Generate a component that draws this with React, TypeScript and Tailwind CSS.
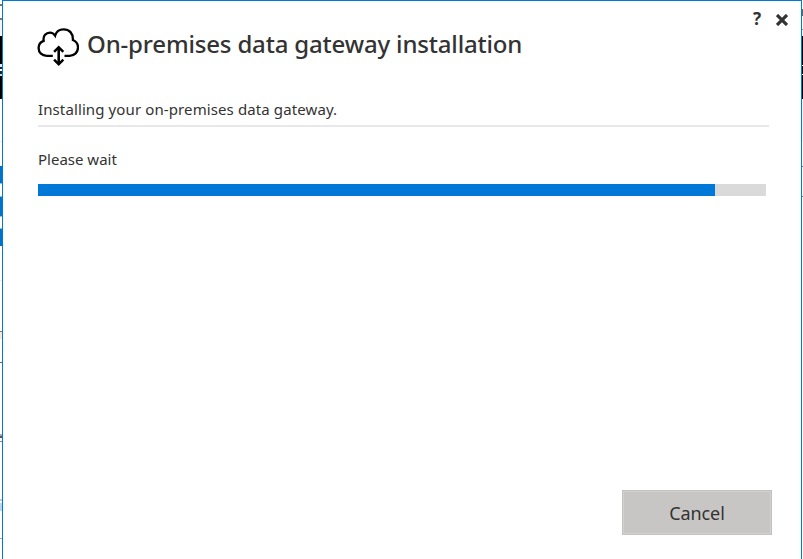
import React from 'react';

interface Segment {
  height: number;
  color: string;
}

const PROGRESS = 93;

// Slivers of the desktop that stay visible beside the dialog
const leftEdge: Segment[] = [
  { height: 4, color: 'bg-white' },
  { height: 2, color: 'bg-[#777777]' },
  { height: 12, color: 'bg-white' },
  { height: 2, color: 'bg-[#777777]' },
  { height: 16, color: 'bg-[#f4f4f4]' },
  { height: 28, color: 'bg-black' },
  { height: 3, color: 'bg-[#dce8ff]' },
  { height: 2, color: 'bg-[#0b1f6b]' },
  { height: 2, color: 'bg-white' },
  { height: 3, color: 'bg-[#0a2a40]' },
  { height: 2, color: 'bg-[#b8dcf0]' },
  { height: 23, color: 'bg-black' },
  { height: 42, color: 'bg-white' },
  { height: 1, color: 'bg-[#eeeeee]' },
  { height: 24, color: 'bg-white' },
  { height: 17, color: 'bg-[#0072c9]' },
  { height: 1, color: 'bg-[#8fc3e9]' },
  { height: 12, color: 'bg-white' },
  { height: 1, color: 'bg-[#8fc3e9]' },
  { height: 19, color: 'bg-[#0072c9]' },
  { height: 1, color: 'bg-[#8fc3e9]' },
  { height: 11, color: 'bg-white' },
  { height: 1, color: 'bg-[#8fc3e9]' },
  { height: 17, color: 'bg-[#0072c9]' },
  { height: 34, color: 'bg-white' },
  { height: 1, color: 'bg-[#eeeeee]' },
  { height: 50, color: 'bg-white' },
  { height: 1, color: 'bg-[#777777]' },
  { height: 7, color: 'bg-[#f7e9da]' },
  { height: 23, color: 'bg-white' },
  { height: 1, color: 'bg-[#666666]' },
  { height: 71, color: 'bg-white' },
  { height: 2, color: 'bg-[#9aaed0]' },
  { height: 2, color: 'bg-[#60544c]' },
  { height: 3, color: 'bg-white' },
  { height: 1, color: 'bg-[#7c8ba0]' },
  { height: 57, color: 'bg-white' },
  { height: 2, color: 'bg-[#b5cdea]' },
  { height: 2, color: 'bg-white' },
  { height: 8, color: 'bg-[#b5d8f5]' },
  { height: 27, color: 'bg-white' },
  { height: 1, color: 'bg-[#aaaaaa]' },
  { height: 20, color: 'bg-white' },
];

const rightEdge: Segment[] = [
  { height: 9, color: 'bg-white' },
  { height: 7, color: 'bg-[#666666]' },
  { height: 13, color: 'bg-white' },
  { height: 1, color: 'bg-[#999999]' },
  { height: 6, color: 'bg-[#f4f4f4]' },
  { height: 29, color: 'bg-black' },
  { height: 1, color: 'bg-white' },
  { height: 8, color: 'bg-black' },
  { height: 1, color: 'bg-white' },
  { height: 24, color: 'bg-black' },
  { height: 43, color: 'bg-[#f4f4f4]' },
  { height: 24, color: 'bg-white' },
  { height: 1, color: 'bg-[#777777]' },
  { height: 29, color: 'bg-white' },
  { height: 1, color: 'bg-[#777777]' },
  { height: 362, color: 'bg-white' },
];

const Edge: React.FC<{ segments: Segment[]; width: string }> = ({ segments, width }) => (
  <div className={`flex shrink-0 flex-col overflow-hidden ${width}`}>
    {segments.map((segment, index) => (
      <div key={index} className={`shrink-0 ${segment.color}`} style={{ height: segment.height }} />
    ))}
  </div>
);

const CloudIcon: React.FC = () => (
  <svg className="mt-[26px] h-10 w-[42px] shrink-0" viewBox="0 0 42 40" fill="none" stroke="black" strokeWidth="2.3">
    <path d="M15.8 28.8H9.8C5 28.8 1.6 25.7 1.6 21C1.6 17.5 3.6 14.9 6.7 13.8C5.7 8.8 9.2 5.6 13 5.6C15.1 5.6 16.9 6.7 18.1 8.6C19.3 4.4 22.7 2.3 26.6 2.3C32.3 2.3 36.2 6.3 35.9 13C39.1 14.3 41 17 41 20.3C41 25.3 37.5 28.8 32.6 28.8H27.5" />
    <path d="M21.7 20.5V37" strokeWidth="2.6" />
    <path d="M17.1 24.8L21.7 20.2L26.3 24.8M17.1 32.7L21.7 37.3L26.3 32.7" strokeWidth="2.5" />
  </svg>
);

const App: React.FC = () => {
  return (
    <div className="flex h-[559px] w-[803px] overflow-hidden bg-white font-['Noto_Sans','Open_Sans',sans-serif] text-[#333333]">
      <Edge segments={leftEdge} width="w-[2px]" />

      <main className="flex w-[800px] shrink-0 flex-col border-x border-t border-[#0078d7] bg-white">
        {/* Title bar */}
        <header className="flex h-[83px] shrink-0 items-start pl-[34px]">
          <CloudIcon />
          <h1 className="mt-[25px] ml-2 text-[24px] leading-9 font-medium tracking-[-0.17px] whitespace-nowrap">
            On-premises data gateway installation
          </h1>
          <div className="mt-[8px] mr-[13px] ml-auto flex items-center gap-[14px]">
            <button className="mr-px text-[17px] leading-5 font-bold" aria-label="Help">?</button>
            <button aria-label="Close">
              <svg className="mt-px h-3 w-3" viewBox="0 0 12 12" fill="none" stroke="#333333" strokeWidth="3.2">
                <path d="M1 1L11 11M11 1L1 11" />
              </svg>
            </button>
          </div>
        </header>

        {/* Progress */}
        <section className="flex flex-col pl-[35px] text-[15px]">
          <p className="h-[43px] w-[731px] border-b-2 border-[#e8e8e8] pt-[14px] leading-[22px] tracking-[0.11px] whitespace-nowrap">
            Installing your on-premises data gateway.
          </p>
          <p className="mt-[21px] leading-[22px]">Please wait</p>
          <div className="mt-[14px] h-3 w-[728px] bg-[#dadada]">
            <div className="h-full bg-[#0078d7]" style={{ width: `${PROGRESS}%` }} />
          </div>
        </section>

        <footer className="mt-auto mr-[29px] mb-6 flex justify-end">
          <button className="h-[45px] w-[150px] border border-[#c2c1c0] bg-[#c8c6c4] text-[18px] leading-6 tracking-[-0.1px] shadow-[inset_0_0_0_1px_#d2d1d0]">
            Cancel
          </button>
        </footer>
      </main>

      <Edge segments={rightEdge} width="w-px" />
    </div>
  );
};

export default App;
